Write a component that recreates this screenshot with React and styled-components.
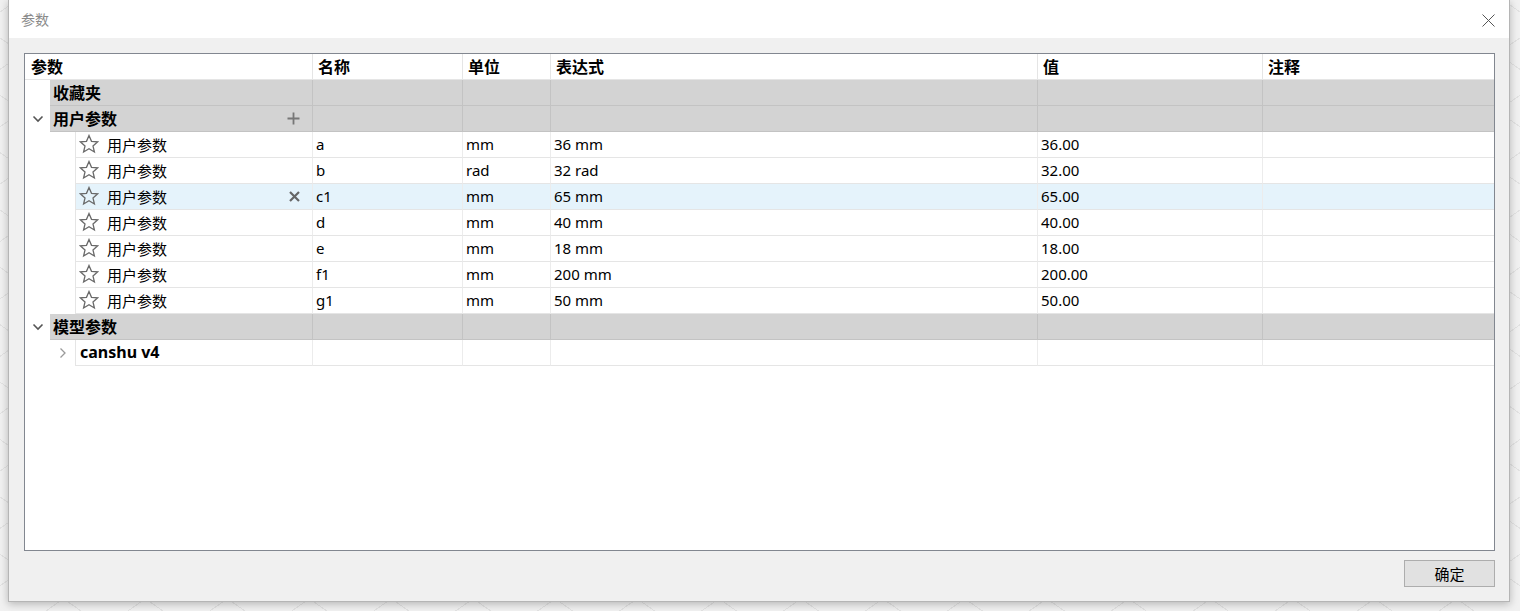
import React from 'react';
import styled, { createGlobalStyle } from 'styled-components';

const GlobalStyle = createGlobalStyle`
    html, body {
        margin: 0;
        padding: 0;
    }
    body {
        width: 1520px;
        height: 611px;
        overflow: hidden;
        background-color: #f1f1f1;
        background-image:
            repeating-linear-gradient(35deg, transparent 0 46px, #e2e2e2 46px 47px),
            repeating-linear-gradient(-35deg, transparent 0 46px, #e2e2e2 46px 47px);
        font-family: "Noto Sans", "Noto Sans CJK SC", sans-serif;
        font-size: 15px;
        color: #000;
    }
`;

const COLS = '288px 150px 88px 487px 225px 1fr';

const userParams = [
    { name: 'a', unit: 'mm', expr: '36 mm', value: '36.00' },
    { name: 'b', unit: 'rad', expr: '32 rad', value: '32.00' },
    { name: 'c1', unit: 'mm', expr: '65 mm', value: '65.00', selected: true },
    { name: 'd', unit: 'mm', expr: '40 mm', value: '40.00' },
    { name: 'e', unit: 'mm', expr: '18 mm', value: '18.00' },
    { name: 'f1', unit: 'mm', expr: '200 mm', value: '200.00' },
    { name: 'g1', unit: 'mm', expr: '50 mm', value: '50.00' },
];

const StarIcon = () => (
    <svg width="20" height="20" viewBox="0 0 20 20">
        <polygon
            points="10,1.5 12.5,7.3 18.7,7.8 14,11.9 15.4,18 10,14.8 4.6,18 6,11.9 1.3,7.8 7.5,7.3"
            fill="none"
            stroke="#6a6a6a"
            strokeWidth="1.3"
            strokeLinejoin="miter"
        />
    </svg>
);

const ChevronDown = () => (
    <svg width="12" height="8" viewBox="0 0 12 8">
        <path d="M1.5 1.5 L6 6 L10.5 1.5" fill="none" stroke="#555" strokeWidth="1.6" />
    </svg>
);

const ChevronRight = () => (
    <svg width="8" height="12" viewBox="0 0 8 12">
        <path d="M1.5 1.5 L6 6 L1.5 10.5" fill="none" stroke="#9a9a9a" strokeWidth="1.3" />
    </svg>
);

const PlusIcon = () => (
    <svg width="13" height="13" viewBox="0 0 13 13">
        <path d="M6.5 0.5 V12.5 M0.5 6.5 H12.5" stroke="#777" strokeWidth="1.8" />
    </svg>
);

const CrossIcon = () => (
    <svg width="11" height="11" viewBox="0 0 11 11">
        <path d="M1 1 L10 10 M10 1 L1 10" stroke="#666" strokeWidth="2.2" />
    </svg>
);

const CloseIcon = () => (
    <svg width="13" height="13" viewBox="0 0 13 13">
        <path d="M0.5 0.5 L12.5 12.5 M12.5 0.5 L0.5 12.5" stroke="#555" strokeWidth="1" />
    </svg>
);

const GroupRow = ({ label, expanded, action, indent }) => (
    <Row>
        <FirstCell>
            <Indent $width={indent}>{expanded && <ChevronDown />}</Indent>
            <FirstInner $kind="group">
                <GroupLabel>{label}</GroupLabel>
                {action}
            </FirstInner>
        </FirstCell>
        {[0, 1, 2, 3, 4].map(i => <Cell key={i} $kind="group" />)}
    </Row>
);

const App = () => {
    return (
        <>
            <GlobalStyle />
            <Dialog>
                <TitleBar>
                    <Title>参数</Title>
                    <CloseButton><CloseIcon /></CloseButton>
                </TitleBar>
                <Body>
                    <Table>
                        <Row>
                            <HeaderCell>参数</HeaderCell>
                            <HeaderCell>名称</HeaderCell>
                            <HeaderCell>单位</HeaderCell>
                            <HeaderCell>表达式</HeaderCell>
                            <HeaderCell>值</HeaderCell>
                            <HeaderCell $last>注释</HeaderCell>
                        </Row>
                        <GroupRow label="收藏夹" indent={25} />
                        <GroupRow
                            label="用户参数"
                            indent={25}
                            expanded
                            action={<ActionIcon><PlusIcon /></ActionIcon>}
                        />
                        {userParams.map(p => (
                            <Row key={p.name} $selected={p.selected}>
                                <FirstCell>
                                    <Indent $width={50} />
                                    <FirstInner $kind="item">
                                        <StarIcon />
                                        <ItemLabel>用户参数</ItemLabel>
                                        {p.selected && <ActionIcon><CrossIcon /></ActionIcon>}
                                    </FirstInner>
                                </FirstCell>
                                <Cell>{p.name}</Cell>
                                <Cell>{p.unit}</Cell>
                                <Cell>{p.expr}</Cell>
                                <Cell>{p.value}</Cell>
                                <Cell />
                            </Row>
                        ))}
                        <GroupRow label="模型参数" indent={25} expanded />
                        <Row>
                            <FirstCell>
                                <Indent $width={50} $align="right"><ChevronRight /></Indent>
                                <FirstInner $kind="item">
                                    <ModelLabel>canshu v4</ModelLabel>
                                </FirstInner>
                            </FirstCell>
                            {[0, 1, 2, 3, 4].map(i => <Cell key={i} />)}
                        </Row>
                    </Table>
                    <Footer>
                        <OkButton>确定</OkButton>
                    </Footer>
                </Body>
            </Dialog>
        </>
    );
};

//Styled Components
const Dialog = styled.div`
    margin-left: 8px;
    width: 1502px;
    height: 602px;
    box-sizing: border-box;
    border: 1px solid #b5b5b5;
    border-top: none;
    background: #f0f0f0;
    box-shadow: 0 2px 8px rgba(0, 0, 0, 0.25);
    display: flex;
    flex-direction: column;
`;

const TitleBar = styled.div`
    height: 38px;
    background: #fff;
    display: flex;
    align-items: center;
    justify-content: space-between;
    padding: 0 14px 0 12px;
`;

const Title = styled.span`
    color: #8a8a8a;
    font-size: 14px;
    font-family: "Noto Sans CJK SC", sans-serif;
`;

const CloseButton = styled.span`
    display: flex;
    align-items: center;
    margin-top: 2px;
`;

const Body = styled.div`
    flex: 1;
    display: flex;
    flex-direction: column;
    padding: 15px 14px 14px 15px;
`;

const Table = styled.div`
    height: 498px;
    box-sizing: border-box;
    border: 1px solid #828790;
    background: #fff;
    display: flex;
    flex-direction: column;
`;

const Row = styled.div`
    display: grid;
    grid-template-columns: ${COLS};
    height: 26px;
    background: ${p => (p.$selected ? 'linear-gradient(to right, transparent 50px, #e5f3fb 50px)' : 'transparent')};
`;

const HeaderCell = styled.div`
    display: flex;
    align-items: center;
    padding: 0 0 1px 5px;
    font-size: 16px;
    font-weight: bold;
    font-family: "Noto Sans CJK SC", sans-serif;
    border-right: ${p => (p.$last ? 'none' : '1px solid #e5e5e5')};
    border-bottom: 1px solid #e5e5e5;
    &:first-child {
        padding-left: 6px;
    }
`;

const Cell = styled.div`
    display: flex;
    align-items: center;
    padding: 0 0 2px 3px;
    box-sizing: border-box;
    background: ${p => (p.$kind === 'group' ? '#d3d3d3' : 'transparent')};
    border-right: 1px solid ${p => (p.$kind === 'group' ? '#c3c3c3' : '#ececec')};
    border-bottom: 1px solid ${p => (p.$kind === 'group' ? '#c3c3c3' : '#e5e5e5')};
    &:last-child {
        border-right: none;
    }
`;

const FirstCell = styled.div`
    display: flex;
    height: 26px;
`;

const Indent = styled.div`
    width: ${p => p.$width}px;
    flex-shrink: 0;
    display: flex;
    align-items: center;
    justify-content: ${p => (p.$align === 'right' ? 'flex-end' : 'center')};
    padding-right: ${p => (p.$align === 'right' ? 8 : 0)}px;
    box-sizing: border-box;
`;

const FirstInner = styled.div`
    flex: 1;
    display: flex;
    align-items: center;
    box-sizing: border-box;
    padding: 0 12px 1px ${p => (p.$kind === 'group' ? 3 : 3)}px;
    gap: 8px;
    background: ${p => (p.$kind === 'group' ? '#d3d3d3' : 'transparent')};
    border-left: ${p => (p.$kind === 'group' ? 'none' : '1px solid #e5e5e5')};
    border-right: 1px solid ${p => (p.$kind === 'group' ? '#c3c3c3' : '#ececec')};
    border-bottom: 1px solid ${p => (p.$kind === 'group' ? '#c3c3c3' : '#e5e5e5')};
`;

const GroupLabel = styled.span`
    flex: 1;
    font-size: 16px;
    font-weight: bold;
    font-family: "Noto Sans CJK SC", sans-serif;
`;

const ItemLabel = styled.span`
    flex: 1;
    font-size: 15px;
    font-family: "Noto Sans CJK SC", sans-serif;
`;

const ModelLabel = styled.span`
    font-size: 16px;
    font-weight: bold;
    padding-left: 1px;
`;

const ActionIcon = styled.span`
    display: flex;
    align-items: center;
`;

const Footer = styled.div`
    flex: 1;
    display: flex;
    justify-content: flex-end;
    align-items: flex-start;
    padding-top: 9px;
`;

const OkButton = styled.button`
    width: 91px;
    height: 27px;
    background: #e1e1e1;
    border: 1px solid #adadad;
    font-family: "Noto Sans CJK SC", sans-serif;
    font-size: 15px;
    color: #000;
    padding: 0;
`;

export default App;
